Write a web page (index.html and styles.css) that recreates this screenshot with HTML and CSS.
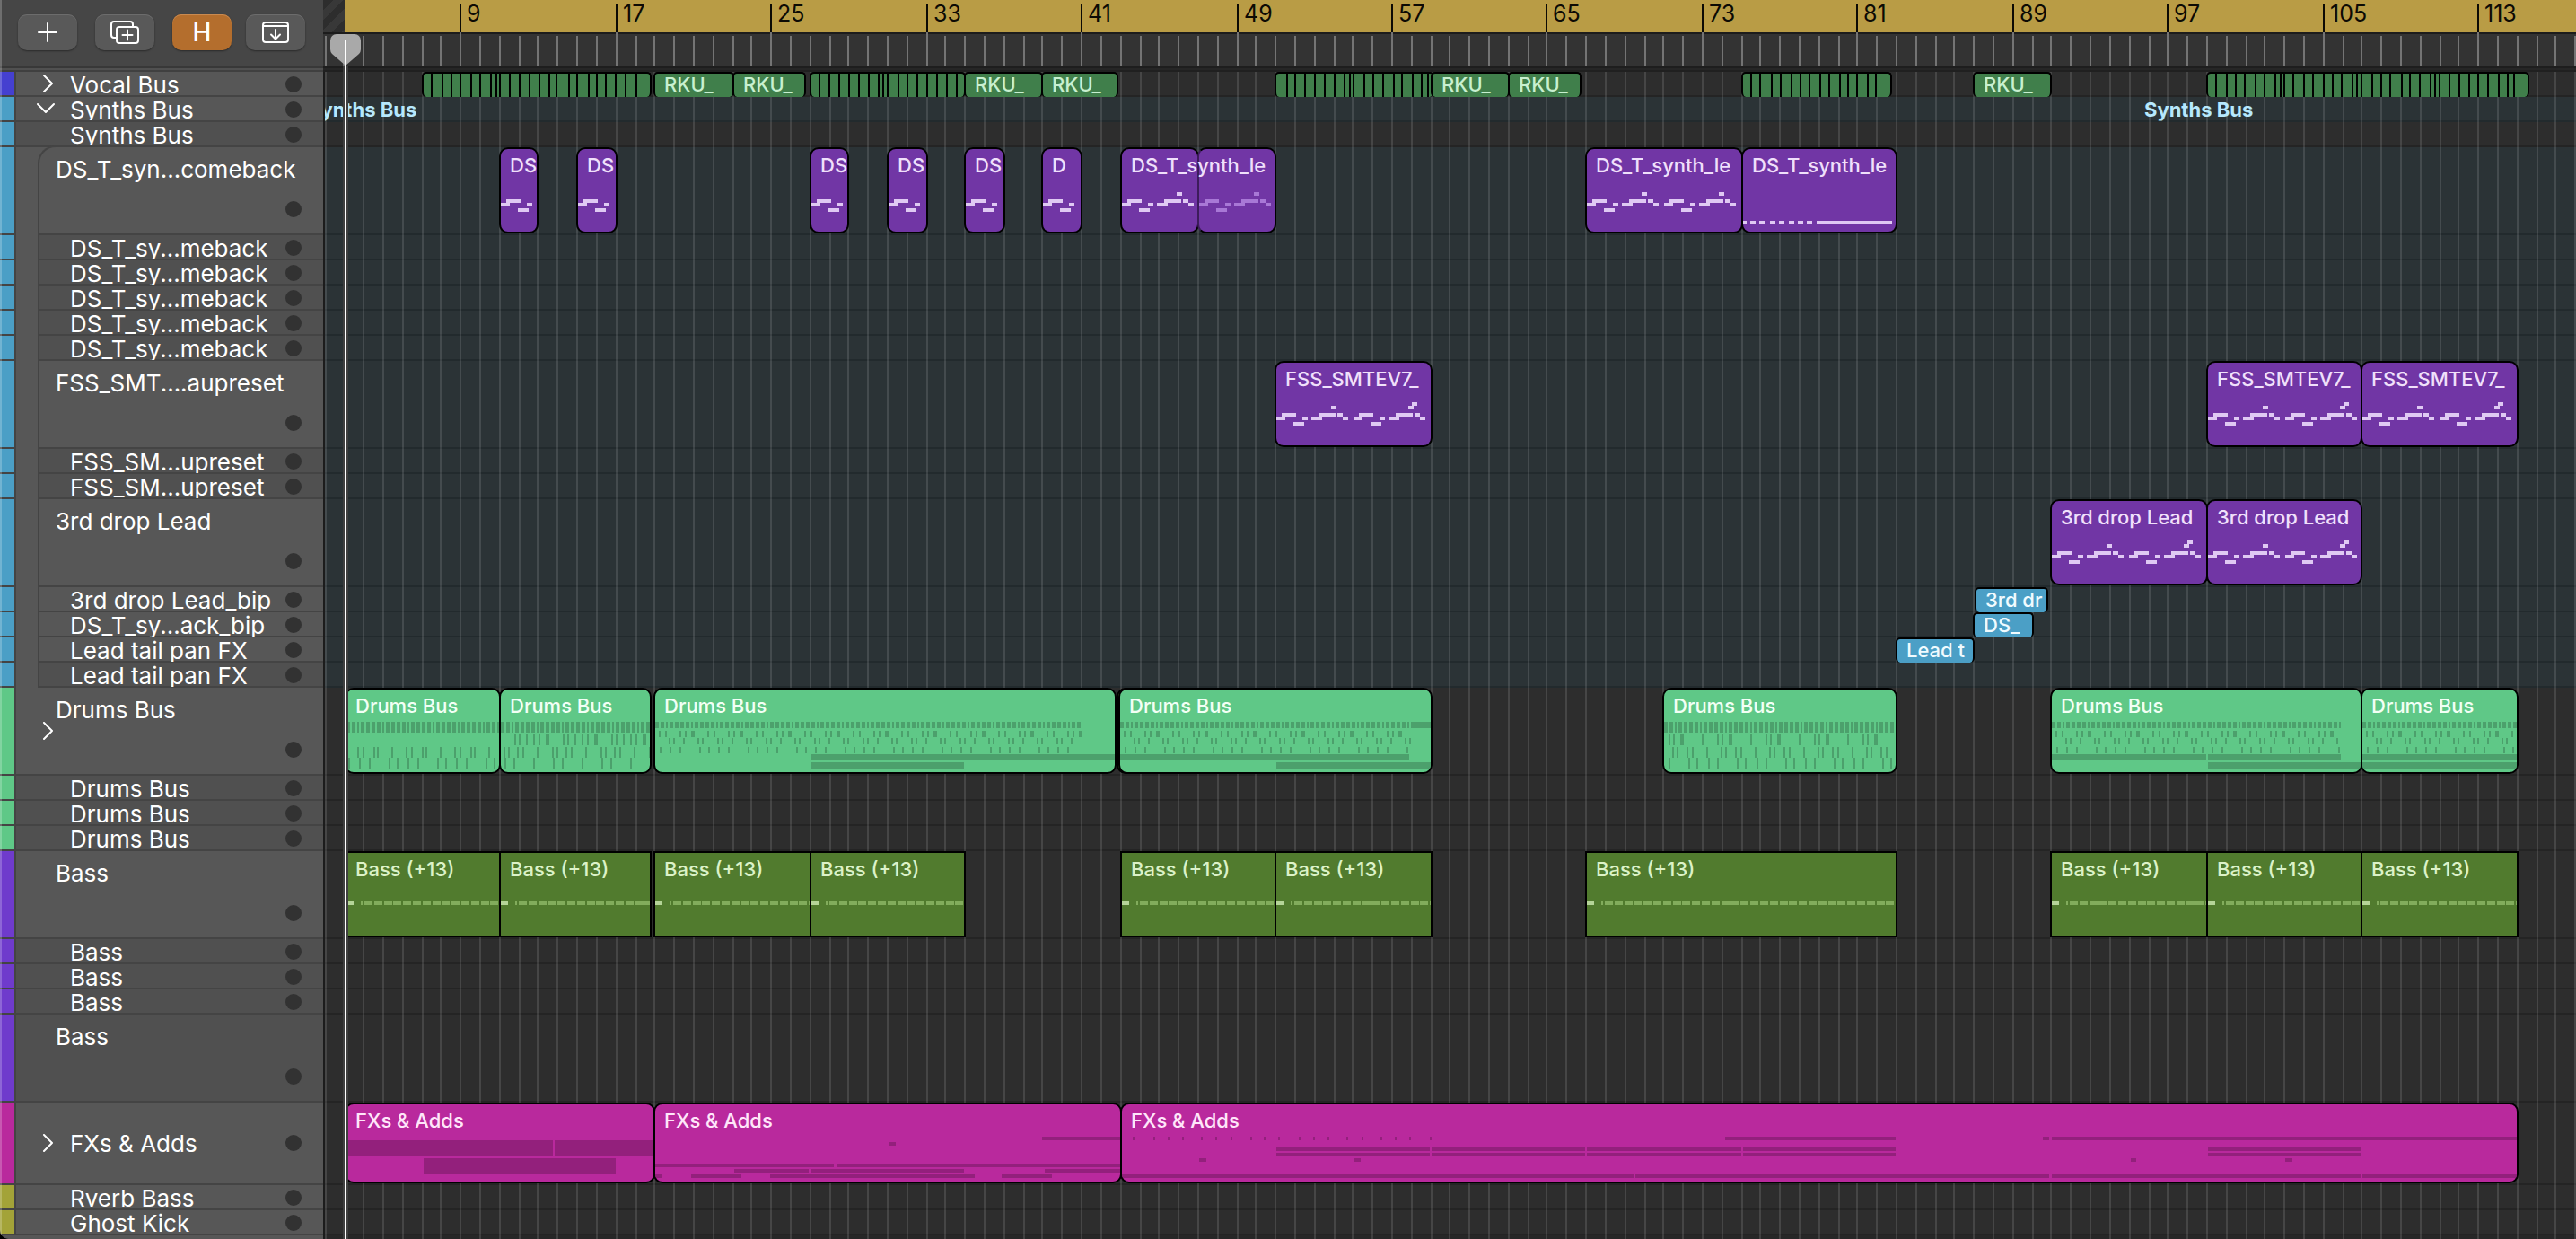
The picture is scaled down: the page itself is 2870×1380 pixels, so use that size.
FILE: index.html
```html
<!DOCTYPE html>
<html lang="en">
<head>
<meta charset="utf-8">
<meta name="viewport" content="width=device-width, initial-scale=1">
<title>Tracks</title>
<link rel="stylesheet" href="styles.css">
</head>
<body>
<main class="app">
  <header class="toolbar">
    <div class="cluster">
      <button class="tool" type="button" aria-label="Add track">
        <svg width="24" height="24" viewBox="0 0 24 24"><path d="M12 2v20M2 12h20"/></svg>
      </button>
      <button class="tool" type="button" aria-label="Duplicate track">
        <svg width="34" height="28" viewBox="0 0 34 28"><path d="M7 20H5a3 3 0 0 1-3-3V5a3 3 0 0 1 3-3h18a3 3 0 0 1 3 3v2"/><rect x="8" y="8" width="24" height="18" rx="3"/><path d="M20 11.500v11M14.500 17h11"/></svg>
      </button>
      <button class="tool tool--on" type="button" aria-label="Hide tracks" aria-pressed="true">H</button>
    </div>
    <button class="tool" type="button" aria-label="Show sub rows">
      <svg width="32" height="26" viewBox="0 0 32 26"><rect x="2" y="2" width="28" height="22" rx="3"/><path d="M2 6h28M16 10v10M11 15.500l5 5 5-5"/></svg>
    </button>
  </header>

  <div class="ruler" id="ruler">
    <div class="cycle"></div>
  </div>

  <aside class="tracks" aria-label="Tracks">
    <div class="track blue-violet"><button class="fold" type="button" aria-label="Expand"><svg width="14" height="20" viewBox="0 0 14 20"><path d="M2 1l9 9-9 9"/></svg></button><span class="name">Vocal Bus</span><button class="dot" type="button" aria-label="Record"></button></div>
    <div class="track sky"><button class="fold fold--open" type="button" aria-label="Collapse"><svg width="20" height="14" viewBox="0 0 20 14"><path d="M1 2l9 9 9-9"/></svg></button><span class="name">Synths Bus</span><button class="dot" type="button" aria-label="Record"></button></div>
    <div class="track sky dim bare"><span class="name">Synths Bus</span><button class="dot" type="button" aria-label="Record"></button></div>
    <div class="track tall sky nested first"><span class="name">DS_T_syn...comeback</span><button class="dot" type="button" aria-label="Record"></button></div>
    <div class="track sky nested dim"><span class="name">DS_T_sy...meback</span><button class="dot" type="button" aria-label="Record"></button></div>
    <div class="track sky nested dim"><span class="name">DS_T_sy...meback</span><button class="dot" type="button" aria-label="Record"></button></div>
    <div class="track sky nested dim"><span class="name">DS_T_sy...meback</span><button class="dot" type="button" aria-label="Record"></button></div>
    <div class="track sky nested dim"><span class="name">DS_T_sy...meback</span><button class="dot" type="button" aria-label="Record"></button></div>
    <div class="track sky nested dim"><span class="name">DS_T_sy...meback</span><button class="dot" type="button" aria-label="Record"></button></div>
    <div class="track tall sky nested"><span class="name">FSS_SMT....aupreset</span><button class="dot" type="button" aria-label="Record"></button></div>
    <div class="track sky nested dim"><span class="name">FSS_SM...upreset</span><button class="dot" type="button" aria-label="Record"></button></div>
    <div class="track sky nested dim"><span class="name">FSS_SM...upreset</span><button class="dot" type="button" aria-label="Record"></button></div>
    <div class="track tall sky nested"><span class="name">3rd drop Lead</span><button class="dot" type="button" aria-label="Record"></button></div>
    <div class="track sky nested"><span class="name">3rd drop Lead_bip</span><button class="dot" type="button" aria-label="Record"></button></div>
    <div class="track sky nested"><span class="name">DS_T_sy...ack_bip</span><button class="dot" type="button" aria-label="Record"></button></div>
    <div class="track sky nested"><span class="name">Lead tail pan FX</span><button class="dot" type="button" aria-label="Record"></button></div>
    <div class="track sky nested dim"><span class="name">Lead tail pan FX</span><button class="dot" type="button" aria-label="Record"></button></div>
    <div class="track tall mint"><button class="fold" type="button" aria-label="Expand"><svg width="14" height="20" viewBox="0 0 14 20"><path d="M2 1l9 9-9 9"/></svg></button><span class="name">Drums Bus</span><button class="dot" type="button" aria-label="Record"></button></div>
    <div class="track mint dim"><span class="name">Drums Bus</span><button class="dot" type="button" aria-label="Record"></button></div>
    <div class="track mint dim"><span class="name">Drums Bus</span><button class="dot" type="button" aria-label="Record"></button></div>
    <div class="track mint dim"><span class="name">Drums Bus</span><button class="dot" type="button" aria-label="Record"></button></div>
    <div class="track tall violet"><span class="name">Bass</span><button class="dot" type="button" aria-label="Record"></button></div>
    <div class="track violet dim"><span class="name">Bass</span><button class="dot" type="button" aria-label="Record"></button></div>
    <div class="track violet dim"><span class="name">Bass</span><button class="dot" type="button" aria-label="Record"></button></div>
    <div class="track violet dim"><span class="name">Bass</span><button class="dot" type="button" aria-label="Record"></button></div>
    <div class="track tall violet dim"><span class="name">Bass</span><button class="dot" type="button" aria-label="Record"></button></div>
    <div class="track bus magenta"><button class="fold" type="button" aria-label="Expand"><svg width="14" height="20" viewBox="0 0 14 20"><path d="M2 1l9 9-9 9"/></svg></button><span class="name">FXs &amp; Adds</span><button class="dot" type="button" aria-label="Record"></button></div>
    <div class="track olive"><span class="name">Rverb Bass</span><button class="dot" type="button" aria-label="Record"></button></div>
    <div class="track olive"><span class="name">Ghost Kick</span><button class="dot" type="button" aria-label="Record"></button></div>
  </aside>

  <section class="lanes" id="lanes" aria-label="Arrangement">
    <div class="lane" id="vocal"></div>
    <div class="lane group" id="synths"></div>
    <div class="lane"></div>
    <div class="lane tall group" id="comeback"></div>
    <div class="lane group"></div>
    <div class="lane group"></div>
    <div class="lane group"></div>
    <div class="lane group"></div>
    <div class="lane group"></div>
    <div class="lane tall group" id="fss"></div>
    <div class="lane group"></div>
    <div class="lane group"></div>
    <div class="lane tall group" id="drop"></div>
    <div class="lane group" id="dropbip"></div>
    <div class="lane group" id="dsbip"></div>
    <div class="lane group" id="tail"></div>
    <div class="lane group"></div>
    <div class="lane tall" id="drums"></div>
    <div class="lane"></div>
    <div class="lane"></div>
    <div class="lane"></div>
    <div class="lane tall" id="bass"></div>
    <div class="lane"></div>
    <div class="lane"></div>
    <div class="lane"></div>
    <div class="lane tall"></div>
    <div class="lane bus" id="fx"></div>
    <div class="lane"></div>
    <div class="lane"></div>
  </section>

  <div class="playhead" aria-hidden="true">
    <svg width="34" height="36" viewBox="0 0 34 36"><path d="M7 0h20a7 7 0 0 1 7 7v10q0 3-2 5L17 35 2 22q-2-2-2-5V7a7 7 0 0 1 7-7z"/></svg>
  </div>
</main>
<script src="app.js"></script>
</body>
</html>
```

FILE: styles.css
```css
*, *::before, *::after { box-sizing: border-box; }

body {
  margin: 0;
  background: #000;
  color: #fff;
  font-family: Inter, "Liberation Sans", sans-serif;
}

button {
  margin: 0;
  padding: 0;
  border: 0;
  background: none;
  color: inherit;
  font: inherit;
}

.app {
  position: relative;
  display: grid;
  grid-template-columns: 360px minmax(0, 1fr);
  grid-template-rows: 80px auto;
  min-height: 100vh;
  overflow: hidden;
  background: #555;
  border-bottom-left-radius: 10px;
}

.app::before {
  content: "";
  position: absolute;
  z-index: 6;
  inset: 0 auto 0 0;
  width: 2px;
  background: rgba(255, 255, 255, .22);
}

/* toolbar */
.toolbar {
  display: flex;
  align-items: center;
  gap: 16px;
  padding: 0 20px 8px;
  background: linear-gradient(#464646 74px, #383838 74px, #383838 76px, #505050 76px, #505050 78px, #404040 78px);
}

.cluster { display: flex; gap: 20px; }

.tool {
  display: grid;
  place-items: center;
  width: 66px;
  height: 40px;
  border-radius: 10px;
  background: #595959;
  box-shadow: inset 0 1px 0 #6c6c6c, 0 1px 2px rgba(0, 0, 0, .4);
  font-size: 28px;
  font-weight: 500;
}

.tool--on {
  background: #b46e2d;
  box-shadow: inset 0 1px 0 #c98a50, 0 1px 2px rgba(0, 0, 0, .4);
}

svg { display: block; fill: none; stroke: #fff; stroke-width: 2; stroke-linecap: round; stroke-linejoin: round; }

/* track headers */
.tracks { position: relative; background: #575757; }

.track {
  position: relative;
  display: flex;
  align-items: center;
  height: 28px;
  padding: 2px 24px 0 78px;
  border-bottom: 2px solid #444;
  background: linear-gradient(90deg, var(--tint) 16px, #444 16px, #444 18px, #575757 18px);
  overflow: hidden;
}

.track.dim { background: linear-gradient(90deg, var(--tint) 16px, #444 16px, #444 18px, #505050 18px); }

.track.tall { height: 98px; padding: 10px 24px 0 62px; align-items: flex-start; }
.track.bus { height: 92px; padding-top: 0; }

.blue-violet { --tint: #4540d0; }
.sky { --tint: #4b9fc6; }
.mint { --tint: #5fc887; }
.violet { --tint: #6f3bcc; }
.magenta { --tint: #b9299d; }
.olive { --tint: #a3a338; }

.name {
  flex: 1;
  min-width: 0;
  height: 26px;
  font-size: 26px;
  font-weight: 400;
  line-height: 28px;
  white-space: nowrap;
}

.tall .name { height: 34px; line-height: 30px; }

.dot {
  flex: none;
  width: 18px;
  height: 18px;
  border-radius: 50%;
  background: #323232;
}

.tall .dot { margin-top: 50px; }

.fold { position: absolute; left: 47px; top: 50%; transform: translateY(-50%); }
.fold--open { left: 41px; }

.track.nested {
  margin-left: 42px;
  padding-left: 34px;
  border-left: 2px solid #444;
  background: #575757;
  overflow: visible;
}

.track.nested.tall { padding-left: 18px; }
.track.nested.dim { background: #505050; }
.nested:not(.tall) .name { overflow: hidden; }

.track.nested::before {
  content: "";
  position: absolute;
  left: -44px;
  top: 0;
  width: 18px;
  height: calc(100% + 2px);
  border-right: 2px solid #444;
  border-bottom: 2px solid #444;
  background: var(--tint);
}

.track.first {
  height: 100px;
  margin-top: -2px;
  padding-top: 10px;
  border-top: 2px solid #444;
  border-top-left-radius: 20px;
}

/* ruler */
.ruler {
  position: relative;
  overflow: hidden;
  background: linear-gradient(#333 36px, #1c1c1c 36px, #1c1c1c 38px, #333 38px, #333 74px, #1e1e1e 74px, #1e1e1e 76px, #262626 76px, #262626 78px, #202020 78px);
}

.ruler::before {
  content: "";
  position: absolute;
  left: 0;
  top: 0;
  width: 24px;
  height: 36px;
  background: repeating-linear-gradient(135deg, #2d2d2d 0 8px, #383838 8px 16px);
}

.cycle { height: 36px; margin-left: 24px; background: #b99c45; }

.bar-number {
  position: absolute;
  top: 4px;
  height: 32px;
  padding-left: 6px;
  border-left: 2px solid #0c0a04;
  color: #0c0a04;
  font-size: 25px;
  line-height: 22px;
}

.ruler-ticks, .grid { position: absolute; left: 0; width: 100%; stroke: none; }
.ruler-ticks { top: 36px; height: 38px; fill: #747474; }
.grid { top: 0; height: 100%; z-index: 1; fill: rgba(255, 255, 255, .12); }

/* arrangement */
.lanes {
  position: relative;
  overflow: hidden;
  background: #272727;
  border-left: 2px solid #1c1c1c;
}

.lane {
  position: relative;
  height: 28px;
  border-bottom: 2px solid #242424;
  background: #2d2d2d;
}

.lane.tall { height: 98px; }
.lane.bus { height: 92px; }
.lane.group { background: #2b3336; border-color: #222a2d; }

.group-label {
  position: absolute;
  z-index: 2;
  top: 0;
  color: #b6e8fd;
  font-size: 22px;
  font-weight: 700;
  line-height: 28px;
  white-space: nowrap;
}

.region {
  position: absolute;
  z-index: 2;
  top: 0;
  height: 100%;
  overflow: hidden;
  border: 2px solid #000;
  border-radius: 10px;
  background: var(--fill);
  color: var(--ink);
}

.region svg { position: absolute; inset: 0; width: 100%; height: 100%; stroke: none; fill: var(--note); }
.region .soft { fill: var(--soft); }

.label {
  position: absolute;
  left: 10px;
  right: 0;
  top: 4px;
  font-size: 22px;
  font-weight: 500;
  line-height: 28px;
  white-space: nowrap;
}

.region.purple { --fill: #7136a5; --ink: #f0e0fb; --note: #dfc9f3; --soft: #a878d6; }
.region.green { --fill: #5fc887; --ink: #f2fff5; --note: #4ca06c; }
.region.moss { --fill: #517b2e; --ink: #dcf2c8; --note: #82ac5c; --soft: #b5d498; border-radius: 0; }
.region.pink { --fill: #b9299d; --ink: #ffe6fa; --note: #93207c; }
.region.vocal { --fill: #407f4b; --ink: #c8f0d0; --note: #000; }
.region.blue { --fill: #4b9fc6; --ink: #f0fbff; }
.region.under { --fill: #3f6a26; }

.region.vocal, .region.blue {
  height: 28px;
  border-bottom: 0;
  border-radius: 5px;
}

.region.joined { border-left-color: #3d1c5c; }
.region.caption { border-color: transparent; background: none; }
.vocal .label, .blue .label { top: -2px; }

/* playhead */
.playhead {
  position: absolute;
  z-index: 5;
  left: 382px;
  top: 74px;
  bottom: 0;
  width: 6px;
  border: solid rgba(0, 0, 0, .75);
  border-width: 0 2px;
  background: #fff;
}

.playhead svg { position: absolute; left: -16px; top: -36px; fill: #a9a9a9; stroke: none; }

.playhead::after {
  content: "";
  position: absolute;
  left: 0;
  top: -30px;
  width: 2px;
  height: 30px;
  background: #fff;
}
```

FILE: app.js
```js
const BAR = 21.615;
const FIRST = -22.4;
const START = 22;
const LAST_BAR = 118;
const SVG = 'http://www.w3.org/2000/svg';

// Left edge of a bar in the arrangement, snapped to the two-pixel grid.
const at = bar => 2 * Math.round((FIRST + (bar - 1) * BAR) / 2);

function svg(cls, parent) {
  const s = document.createElementNS(SVG, 'svg');
  if (cls) s.setAttribute('class', cls);
  parent.append(s);
  return s;
}

function rects(s, list, cls) {
  const p = document.createElementNS(SVG, 'path');
  p.setAttribute('d', list.map(([x, y, w, h]) => `M${Math.round(x)} ${y}h${Math.round(w)}v${h}h${-Math.round(w)}z`).join(''));
  if (cls) p.setAttribute('class', cls);
  s.append(p);
}

function region(lane, cls, from, to, text, notes = [], soft = []) {
  const el = document.createElement('div');
  const left = Math.max(at(from), START);
  el.className = 'region ' + cls;
  el.style.left = left + 'px';
  el.style.width = at(to) - left + 2 + 'px';
  if (notes.length || soft.length) {
    const s = svg('', el);
    rects(s, notes);
    rects(s, soft, 'soft');
  }
  if (text) {
    const label = document.createElement('span');
    label.className = 'label';
    label.textContent = text;
    el.append(label);
  }
  document.getElementById(lane).append(el);
}

// Ruler and grid
const ruler = document.getElementById('ruler');
const lanes = document.getElementById('lanes');
const ticks = [], lines = [];
for (let b = 2; b <= LAST_BAR; b++) {
  const major = b % 8 === 1;
  ticks.push([at(b) + 2, major ? 0 : 4, 2, major ? 38 : 34]);
  lines.push([at(b), 0, 2, 4000]);
  if (major) {
    const n = document.createElement('span');
    n.className = 'bar-number';
    n.textContent = b;
    n.style.left = at(b) + 2 + 'px';
    ruler.append(n);
  }
}
rects(svg('ruler-ticks', ruler), ticks);
rects(svg('grid', lanes), lines);

// Vocal bus
const slices = [
  [7, 255, [10, 22, 32, 42, 54, 64, 76, 82, 86, 97, 108, 119, 130, 141, 149, 163, 172, 185, 194, 204, 215, 226, 238]],
  [27, 172, [10, 21, 32, 43, 54, 65, 76, 81, 86, 98, 108, 119, 130, 141, 152, 163]],
  [51, 175, [13, 22, 33, 44, 55, 66, 77, 83, 87, 99, 109, 120, 132, 141, 153, 163, 170]],
  [75, 167, [10, 20, 33, 43, 55, 65, 75, 87, 97, 109, 118, 128, 140, 149]],
  [99, 359, [10, 22, 32, 42, 54, 64, 76, 82, 86, 96, 108, 118, 130, 140, 150, 162, 167, 172, 184, 194, 204, 217, 226, 237, 249, 254, 259, 270, 281, 292, 302, 313, 325, 335, 342]]
];
for (const [bar, width, cuts] of slices)
  region('vocal', 'vocal', bar, bar + width / BAR, '', cuts.map(x => [x - 2, 0, 2, 28]));
for (const [a, b] of [[19, 23], [23, 26.75], [35, 39], [39, 42.8], [59, 63], [63, 66.75], [87, 91]])
  region('vocal', 'vocal', a, b, 'RKU_');

// Track stack labels
for (const left of [-19, 2027]) {
  const g = document.createElement('span');
  g.className = 'group-label';
  g.textContent = 'Synths Bus';
  g.style.left = left + 'px';
  document.getElementById('synths').append(g);
}

// Lead melody: one four-bar phrase
const short = (x = 0) => [[0, 60, 10, 4], [6, 56, 16, 4], [19, 66, 12, 4], [29, 60, 6, 4]].map(n => [n[0] + x, ...n.slice(1)]);
const phrase = (x = 0, turn) => [...short(x), [39 + x, 60, 12, 4], [47 + x, 56, 19, 4], [61 + x, 48, 6, 4], [68 + x, 56, 6, 4], [74 + x, 60, 6, 4], ...(turn ? [[65 + x, 44, 6, 4]] : [])];

for (const b of [11, 15, 27, 31, 35, 39])
  region('comeback', 'purple', b, b + 2, b === 39 ? 'D' : 'DS', short());
region('comeback', 'purple', 43, 47, '', phrase());
region('comeback', 'purple joined', 47, 51, '', [], phrase());
region('comeback', 'purple caption', 43, 51, 'DS_T_synth_le');
region('comeback', 'purple', 67, 75, 'DS_T_synth_le', [...phrase(), ...phrase(86)]);
region('comeback', 'purple', 75, 83, 'DS_T_synth_le', [[0, 80, 4, 4], [8, 80, 6, 4], [18, 80, 6, 4], [30, 80, 6, 4], [40, 80, 6, 4], [51, 80, 6, 4], [61, 80, 6, 4], [71, 80, 6, 4], [82, 80, 84, 4]]);
for (const b of [51, 99, 107]) region('fss', 'purple', b, b + 8, 'FSS_SMTEV7_', [...phrase(), ...phrase(86, true)]);
for (const b of [91, 99]) region('drop', 'purple', b, b + 8, '3rd drop Lead', [...phrase(), ...phrase(86, true)]);
region('dropbip', 'blue', 87.05, 90.8, '3rd dr');
region('dsbip', 'blue', 87, 90, 'DS_');
region('tail', 'blue', 83, 87, 'Lead t');

// Drums: hits repeat every two and a half bars
const STEP = 54;
function hits(offsets, y, h, end) {
  const out = [];
  for (let k = 0; k * STEP < end; k++)
    for (const o of offsets) {
      const [x, w] = Array.isArray(o) ? o : [o, 2];
      if (x + k * STEP < end) out.push([x + k * STEP, y, w, h]);
    }
  return out;
}
function hats(h, end) {
  const out = [];
  for (let x = 0, i = 0; x < end; i++) {
    const w = [4, 4, 2, 4, 4][i % 5];
    out.push([x, 36, w, h]);
    x += w + 2;
  }
  return out;
}
const full = end => [
  ...hats(7, end),
  ...hits([11, 27, 33, [40, 4], 4], 46, 7, end),
  ...hits([15, 31, 47, 52, 20], 54, 7, end),
  ...hits([5, 27, 49, 16], 64, 7, end)
];
region('drums', 'green', 3, 11, 'Drums Bus', [...hats(12, 172), ...hits([12, 18, 30, 34, 50], 64, 12, 170), ...hits([2, 14, 25, 47], 76, 12, 170)]);
region('drums', 'green', 11, 18.75, 'Drums Bus', [...hats(12, 172), ...hits([15, 20, 28, 36, 42, [50, 4]], 50, 12, 170), ...hits([3, 8, 18, 24, 40], 64, 12, 170), ...hits([4, 14, 36], 76, 12, 170)]);
region('drums', 'green under', 18.95, 20, '');
region('drums', 'green', 19, 42.72, 'Drums Bus', [...full(474), [174, 72, 400, 7], [174, 81, 170, 7]]);
region('drums', 'green under', 42.84, 44, '');
region('drums', 'green', 42.93, 59, 'Drums Bus', [...full(326), [326, 36, 20, 7], [0, 72, 322, 7], [174, 81, 200, 7]]);
region('drums', 'green', 71, 83, 'Drums Bus', [...hats(12, 260), ...hits([5, 10, [18, 4], 42], 50, 12, 256), ...hits([9, 14, 25, 31, 47], 64, 12, 256), ...hits([5, 27, 36, 49], 76, 12, 256)]);
region('drums', 'green', 91, 107, 'Drums Bus', [...full(322), [0, 72, 172, 7], [174, 72, 148, 7], [174, 81, 200, 7]]);
region('drums', 'green', 107, 115, 'Drums Bus', [...full(172), [0, 72, 200, 7], [0, 81, 200, 7]]);

// Bass: one long note, then half-bar notes
for (const [a, b] of [[3, 11], [11, 18.75], [19, 27], [27, 35], [43, 51], [51, 59], [67, 83], [91, 99], [99, 107], [107, 115]]) {
  const notes = [[16, 54, 2, 4]];
  for (let x = 20; x < at(b) - at(a); x += BAR / 2) notes.push([x, 54, 9, 4]);
  region('bass', 'moss', a, b, 'Bass (+13)', notes, [[0, 54, 8, 4]]);
}

// Effects
const span = (y, h, ...pairs) => pairs.map(([a, b]) => [a - 2, y - 2, b - a, h]);
region('fx', 'pink', 3, 19, 'FXs & Adds', [...span(42, 18, [2, 232], [234, 350]), ...span(62, 18, [88, 302])]);
region('fx', 'pink', 19, 43, 'FXs & Adds', [
  ...span(38, 4, [433, 530]), ...span(44, 4, [262, 270]),
  ...span(68, 4, [2, 201], [204, 530]), ...span(74, 4, [90, 173], [176, 346], [436, 530]),
  ...span(80, 4, [2, 10], [42, 98], [130, 358], [388, 444])
]);
const pulses = [14, 37, 53, 69, 90, 106, 123, 145, 160, 176, 199, 215, 231, 252, 269, 290, 306, 322, 345].map(x => [x, x + 2]);
const pads = [[174, 345], [347, 518], [520, 692], [694, 864], [1212, 1382]];
region('fx', 'pink', 43, 115, 'FXs & Adds', [
  ...span(38, 4, ...pulses, [674, 864], [1028, 1035], [1038, 1560]),
  ...span(50, 4, ...pads), ...span(56, 4, ...pads),
  ...span(62, 4, [88, 96], [260, 268], [1126, 1132], [1298, 1306]),
  ...span(80, 4, [2, 572], [574, 1035], [1038, 1382], [1384, 1560])
]);
```
